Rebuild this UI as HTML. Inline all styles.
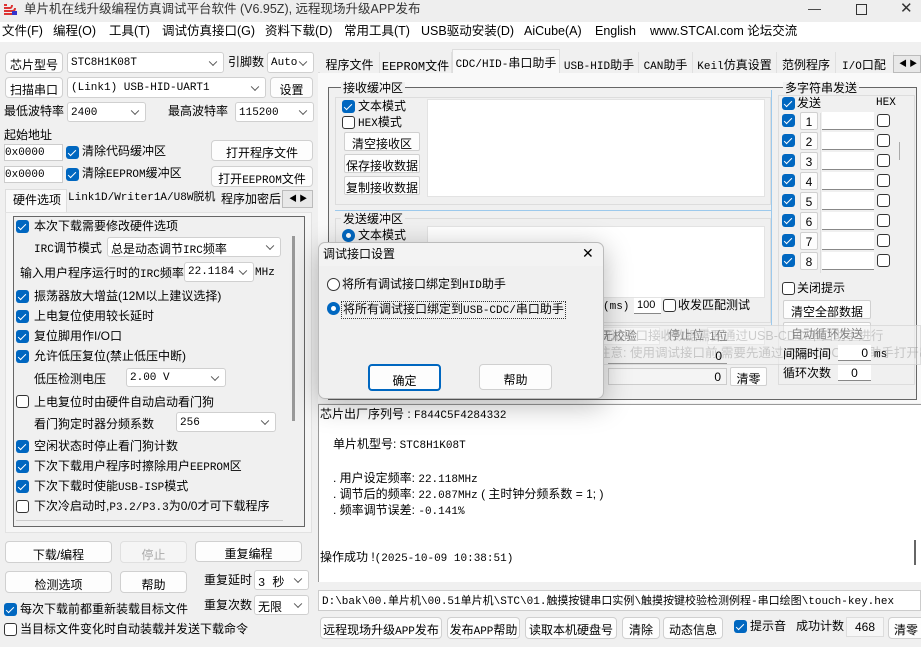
<!DOCTYPE html>
<html><head><meta charset="utf-8"><style>
*{box-sizing:border-box;margin:0;padding:0}
body{width:921px;height:647px;overflow:hidden;background:#f0f0f0;font-family:"Liberation Sans","Noto Sans CJK SC",sans-serif;font-size:12px;color:#000;position:relative}
.a{position:absolute;white-space:nowrap;line-height:1}
.btn{position:absolute;background:#fdfdfd;border:1px solid #d0d0d0;border-radius:4px;text-align:center;font-size:12px;white-space:nowrap}
.cmb{position:absolute;background:#fff;border:1px solid #d0d0d0;border-radius:3px;font-family:"Liberation Mono","Noto Sans CJK SC",monospace;font-size:11px;padding-left:3px;white-space:nowrap}
.cmb::after{content:"";position:absolute;right:7px;top:50%;width:5px;height:5px;border-right:1px solid #555;border-bottom:1px solid #555;transform:translateY(-70%) rotate(45deg)}
.ck{position:absolute;width:13px;height:13px;background:#0067c0;border-radius:3px}
.ck::after{content:"";position:absolute;left:4px;top:1.5px;width:3px;height:7px;border-right:1.3px solid #fff;border-bottom:1.3px solid #fff;transform:rotate(45deg)}
.uk{position:absolute;width:13px;height:13px;border:1px solid #333;border-radius:3px;background:#fff}
.in{position:absolute;background:#fff;border-bottom:1px solid #888;font-family:"Liberation Mono",monospace;font-size:11px}
.m{font-family:"Liberation Mono","Noto Sans CJK SC",monospace;font-size:11px}
.tab{position:absolute;top:52px;height:21px;border-right:1px solid #e0e0e0;text-align:center;padding-top:4px;font-size:12px;background:#f0f0f0}
</style></head><body>
<!-- title -->
<div class="a" style="left:0;top:0;width:921px;height:22px;background:#eeeeee"></div>
<svg class="a" style="left:2px;top:2px" width="16" height="14"><path d="M2 12h10M2 9h8c2 0 3-1 3-3M2 6h6c1 0 2-1 2-3M2 3h3" stroke="#d33" stroke-width="2" fill="none"/><rect x="10" y="9" width="5" height="4" fill="#33c"/></svg>
<div class="a" style="left:24px;top:3px;font-size:12.5px;color:#333">单片机在线升级编程仿真调试平台软件 (V6.95Z), 远程现场升级APP发布</div>
<div class="a" style="left:808px;top:2px;font-size:13px;color:#333">—</div>
<div class="a" style="left:856px;top:0px;width:11px;height:11px;border:1px solid #333;margin-top:4px"></div>
<div class="a" style="left:900px;top:1px;font-size:15px;color:#333">✕</div>
<!-- menu -->
<div class="a" style="left:0;top:22px;width:921px;height:20px;background:#fff"></div>
<div class="a" style="left:2px;top:25px;font-size:12.5px;word-spacing:0">文件(F)</div>
<div class="a" style="left:53px;top:25px;font-size:12.5px">编程(O)</div>
<div class="a" style="left:109px;top:25px;font-size:12.5px">工具(T)</div>
<div class="a" style="left:162px;top:25px;font-size:12.5px">调试仿真接口(G)</div>
<div class="a" style="left:265px;top:25px;font-size:12.5px">资料下载(D)</div>
<div class="a" style="left:344px;top:25px;font-size:12.5px">常用工具(T)</div>
<div class="a" style="left:421px;top:25px;font-size:12.5px">USB驱动安装(D)</div>
<div class="a" style="left:524px;top:25px;font-size:12.5px">AiCube(A)</div>
<div class="a" style="left:595px;top:25px;font-size:12.5px">English</div>
<div class="a" style="left:650px;top:25px;font-size:12.5px">www.STCAI.com 论坛交流</div>

<!-- left panel -->
<div class="btn" style="left:5px;top:52px;width:58px;height:21px;padding-top:3px">芯片型号</div>
<div class="cmb" style="left:67px;top:52px;width:157px;height:21px;padding-top:4px">STC8H1K08T</div>
<div class="a" style="left:228px;top:56px">引脚数</div>
<div class="cmb" style="left:267px;top:52px;width:47px;height:21px;padding-top:4px">Auto</div>
<div class="btn" style="left:5px;top:77px;width:58px;height:21px;padding-top:3px">扫描串口</div>
<div class="cmb" style="left:67px;top:77px;width:199px;height:21px;padding-top:4px">(Link1) USB-HID-UART1</div>
<div class="btn" style="left:270px;top:77px;width:43px;height:21px;padding-top:3px">设置</div>
<div class="a" style="left:4px;top:105px">最低波特率</div>
<div class="cmb" style="left:67px;top:102px;width:79px;height:20px;padding-top:4px">2400</div>
<div class="a" style="left:168px;top:105px">最高波特率</div>
<div class="cmb" style="left:235px;top:102px;width:79px;height:20px;padding-top:4px">115200</div>
<div class="a" style="left:4px;top:129px">起始地址</div>
<div class="in" style="left:4px;top:144px;width:59px;height:17px;padding-top:2px;border:1px solid #ccc">0x0000</div>
<div class="ck" style="left:66px;top:146px"></div><div class="a" style="left:82px;top:145px">清除代码缓冲区</div>
<div class="btn" style="left:211px;top:140px;width:102px;height:21px;padding-top:3px">打开程序文件</div>
<div class="in" style="left:4px;top:166px;width:59px;height:17px;padding-top:2px;border:1px solid #ccc">0x0000</div>
<div class="ck" style="left:66px;top:168px"></div><div class="a" style="left:82px;top:167px">清除<span class="m">EEPROM</span>缓冲区</div>
<div class="btn" style="left:211px;top:166px;width:102px;height:21px;padding-top:3px">打开<span class="m">EEPROM</span>文件</div>
<!-- left tabs -->
<div class="a" style="left:5px;top:189px;width:62px;height:24px;background:#f9f9f9;border:1px solid #ddd;border-bottom:none;padding:4px 0 0 7px">硬件选项</div>
<div class="a m" style="left:68px;top:193px">Link1D/Writer1A/U8W脱机</div>
<div class="a" style="left:221px;top:193px">程序加密后</div>
<div class="a" style="left:282px;top:190px;width:31px;height:18px;background:#e8e8e8;border:1px solid #bbb;font-size:8px;padding:4px 0 0 6px">◀ ▶</div>
<div class="a" style="left:5px;top:212px;width:307px;height:321px;border:1px solid #e2e2e2;background:#f6f6f6"></div>
<div class="a" style="left:13px;top:216px;width:292px;height:311px;border:1px solid #666;background:#f0f0f0"></div>
<div class="a" style="left:292px;top:236px;width:3px;height:185px;background:#999"></div>
<div class="ck" style="left:16px;top:220px"></div><div class="a" style="left:34px;top:220px">本次下载需要修改硬件选项</div>
<div class="a" style="left:34px;top:242px"><span class="m">IRC</span>调节模式</div>
<div class="cmb" style="left:107px;top:237px;width:174px;height:20px;padding-top:2px;font-size:12px">总是动态调节<span class="m">IRC</span>频率</div>
<div class="a" style="left:20px;top:267px">输入用户程序运行时的<span class="m">IRC</span>频率</div>
<div class="cmb" style="left:184px;top:262px;width:70px;height:20px;padding-top:3px">22.1184</div>
<div class="a m" style="left:255px;top:268px">MHz</div>
<div class="ck" style="left:16px;top:290px"></div><div class="a" style="left:34px;top:290px">振荡器放大增益(12M以上建议选择)</div>
<div class="ck" style="left:16px;top:310px"></div><div class="a" style="left:34px;top:310px">上电复位使用较长延时</div>
<div class="ck" style="left:16px;top:330px"></div><div class="a" style="left:34px;top:330px">复位脚用作I/O口</div>
<div class="ck" style="left:16px;top:350px"></div><div class="a" style="left:34px;top:350px">允许低压复位(禁止低压中断)</div>
<div class="a" style="left:34px;top:373px">低压检测电压</div>
<div class="cmb" style="left:126px;top:368px;width:100px;height:19px;padding-top:3px">2.00 V</div>
<div class="uk" style="left:16px;top:395px"></div><div class="a" style="left:34px;top:396px">上电复位时由硬件自动启动看门狗</div>
<div class="a" style="left:34px;top:418px">看门狗定时器分频系数</div>
<div class="cmb" style="left:176px;top:412px;width:100px;height:20px;padding-top:4px">256</div>
<div class="ck" style="left:16px;top:440px"></div><div class="a" style="left:34px;top:440px">空闲状态时停止看门狗计数</div>
<div class="ck" style="left:16px;top:460px"></div><div class="a" style="left:34px;top:460px">下次下载用户程序时擦除用户<span class="m">EEPROM</span>区</div>
<div class="ck" style="left:16px;top:480px"></div><div class="a" style="left:34px;top:480px">下次下载时使能<span class="m">USB-ISP</span>模式</div>
<div class="uk" style="left:16px;top:500px"></div><div class="a" style="left:34px;top:500px">下次冷启动时,<span class="m">P3.2/P3.3</span>为0/0才可下载程序</div>
<div class="a" style="left:16px;top:520px;width:267px;height:1px;background:#ccc"></div>
<!-- left buttons -->
<div class="btn" style="left:5px;top:541px;width:107px;height:22px;padding-top:4px">下载/编程</div>
<div class="btn" style="left:120px;top:541px;width:67px;height:22px;padding-top:4px;color:#aaa;background:#f5f5f5;border-color:#e0e0e0">停止</div>
<div class="btn" style="left:195px;top:541px;width:107px;height:21px;padding-top:3px">重复编程</div>
<div class="btn" style="left:5px;top:571px;width:107px;height:22px;padding-top:4px">检测选项</div>
<div class="btn" style="left:120px;top:571px;width:67px;height:22px;padding-top:4px">帮助</div>
<div class="a" style="left:204px;top:574px">重复延时</div>
<div class="cmb" style="left:254px;top:570px;width:55px;height:20px;padding-top:2px;font-size:12px">3 秒</div>
<div class="ck" style="left:4px;top:603px"></div><div class="a" style="left:20px;top:603px">每次下载前都重新装载目标文件</div>
<div class="a" style="left:204px;top:599px">重复次数</div>
<div class="cmb" style="left:254px;top:595px;width:55px;height:20px;padding-top:2px;font-size:12px">无限</div>
<div class="uk" style="left:4px;top:623px"></div><div class="a" style="left:20px;top:623px">当目标文件变化时自动装载并发送下载命令</div>

<!-- right tabs -->
<div class="a" style="left:318px;top:72px;width:603px;height:1px;background:#ddd"></div>
<div class="tab" style="left:320px;width:60px">程序文件</div>
<div class="tab m" style="left:380px;width:72px;padding-top:5px">EEPROM文件</div>
<div class="tab" style="left:452px;top:49px;height:25px;width:108px;background:#f9f9f9;border:1px solid #ddd;border-bottom:none"><span class="m">CDC/HID-</span>串口助手</div>
<div class="tab" style="left:560px;width:79px"><span class="m">USB-HID</span>助手</div>
<div class="tab" style="left:639px;width:54px"><span class="m">CAN</span>助手</div>
<div class="tab" style="left:693px;width:84px"><span class="m">Keil</span>仿真设置</div>
<div class="tab" style="left:777px;width:59px">范例程序</div>
<div class="tab" style="left:836px;width:58px;text-align:left;overflow:hidden;padding-left:6px"><span class="m">I/O</span>口配置</div>
<div class="a" style="left:893px;top:55px;width:28px;height:18px;background:#e8e8e8;border:1px solid #bbb;font-size:8px;padding:4px 0 0 5px">◀ ▶</div>
<div class="a" style="left:318px;top:73px;width:603px;height:330px;background:#f9f9f9"></div>
<div class="a" style="left:328px;top:87px;width:589px;height:313px;border:1px solid #666;background:#f0f0f0"></div>
<!-- receive group -->
<div class="a" style="left:335px;top:97px;width:436px;height:108px;border:1px solid #ddd"></div>
<div class="a" style="left:341px;top:82px;background:#f0f0f0;padding:0 2px">接收缓冲区</div>
<div class="a" style="left:427px;top:99px;width:338px;height:98px;background:#fff;border:1px solid #e3e3e3"></div>
<div class="ck" style="left:342px;top:100px"></div><div class="a" style="left:358px;top:100px">文本模式</div>
<div class="uk" style="left:342px;top:116px"></div><div class="a" style="left:358px;top:116px"><span class="m">HEX</span>模式</div>
<div class="btn" style="left:344px;top:132px;width:76px;height:19px;padding-top:2px;border-radius:2px">清空接收区</div>
<div class="btn" style="left:344px;top:154px;width:76px;height:19px;padding-top:2px;border-radius:2px">保存接收数据</div>
<div class="btn" style="left:344px;top:176px;width:76px;height:19px;padding-top:2px;border-radius:2px">复制接收数据</div>
<div class="a" style="left:335px;top:210px;width:436px;height:1px;background:#9cc9ec"></div>
<div class="a" style="left:771px;top:90px;width:1px;height:235px;background:#9cc9ec"></div>
<div class="a" style="left:335px;top:218px;width:436px;height:105px;border:1px solid #ddd"></div>
<div class="a" style="left:341px;top:213px;background:#f0f0f0;padding:0 2px">发送缓冲区</div>
<div class="a" style="left:342px;top:229px;width:13px;height:13px;border-radius:50%;border:4px solid #0067c0;background:#fff"></div>
<div class="a" style="left:358px;top:229px">文本模式</div>
<div class="a" style="left:427px;top:226px;width:338px;height:72px;background:#fff;border:1px solid #e3e3e3"></div>
<div class="a" style="left:603px;top:299px"><span class="m">(ms)</span></div>
<div class="a m" style="left:634px;top:298px;width:27px;height:16px;background:#fff;border-bottom:1px solid #888;padding:2px 0 0 3px;font-family:'Liberation Sans'">100</div>
<div class="uk" style="left:663px;top:299px"></div><div class="a" style="left:678px;top:299px">收发匹配测试</div>
<!-- multi-string -->
<div class="a" style="left:778px;top:95px;width:137px;height:290px;border:1px solid #ddd"></div>
<div class="a" style="left:783px;top:82px;background:#f0f0f0;padding:0 2px">多字符串发送</div>
<div class="ck" style="left:782px;top:97px"></div><div class="a" style="left:797px;top:97px">发送</div>
<div class="a m" style="left:876px;top:98px">HEX</div>
<div class="a" style="left:820px;top:113px;width:1px;height:160px;background:#ddd"></div>
<div class="a" style="left:899px;top:142px;width:1px;height:18px;background:#aaa"></div>
<div id="rows"></div>
<div class="uk" style="left:782px;top:282px"></div><div class="a" style="left:797px;top:282px">关闭提示</div>
<div class="btn" style="left:783px;top:300px;width:88px;height:19px;padding-top:2px;border-radius:2px">清空全部数据</div>
<div class="btn" style="left:783px;top:322px;width:88px;height:19px;padding-top:2px;border-radius:2px">自动循环发送</div>
<div class="a" style="left:597px;top:327px;width:63px;height:18px;background:#fff;border:1px solid #ddd;padding:2px 0 0 3px">无校验</div>
<div class="a" style="left:668px;top:329px">停止位</div>
<div class="a" style="left:707px;top:327px;width:58px;height:18px;background:#fff;border:1px solid #ddd;padding:2px 0 0 1px">1位</div>
<div class="a" style="left:597px;top:325px;width:324px;height:40px;background:rgba(240,240,240,.55);border:1px solid rgba(200,200,200,.5)"></div>
<div class="a" style="left:598px;top:330px;color:rgba(120,120,120,.35);font-size:12.5px">调试接口接收数据需要通过USB-CDC/串口助手进行</div>
<div class="a" style="left:598px;top:347px;color:rgba(120,120,120,.35);font-size:12.5px">注意: 使用调试接口前,需要先通过USB-CDC/串口助手打开串口</div>
<div class="a" style="left:783px;top:348px">间隔时间</div>
<div class="a" style="left:838px;top:345px;width:33px;height:16px;background:#fff;border-bottom:1px solid #888;text-align:right;padding:2px 3px 0 0">0</div>
<div class="a m" style="left:874px;top:350px">ms</div>
<div class="a" style="left:783px;top:367px">循环次数</div>
<div class="a" style="left:838px;top:365px;width:33px;height:16px;background:#fff;border-bottom:1px solid #888;text-align:center;padding-top:2px">0</div>
<div class="a" style="left:608px;top:347px;width:119px;height:17px;border-bottom:1px solid #999;text-align:right;padding:3px 5px 0 0">0</div>
<div class="a" style="left:608px;top:368px;width:119px;height:17px;background:#f4f4f4;border:1px solid #ccc;text-align:right;padding:2px 5px 0 0">0</div>
<div class="btn" style="left:730px;top:367px;width:37px;height:19px;padding-top:2px;border-radius:2px">清零</div>

<!-- output -->
<div class="a" style="left:318px;top:404px;width:603px;height:178px;background:#fff;border-left:1px solid #999;border-top:1px solid #999"></div>
<div class="a" style="left:914px;top:540px;width:2px;height:25px;background:#666"></div>
<div class="a" style="left:320px;top:408px">芯片出厂序列号 : <span class="m">F844C5F4284332</span></div>
<div class="a" style="left:333px;top:438px">单片机型号: <span class="m">STC8H1K08T</span></div>
<div class="a" style="left:333px;top:472px">. 用户设定频率: <span class="m">22.118MHz</span></div>
<div class="a" style="left:333px;top:488px">. 调节后的频率: <span class="m">22.087MHz</span> ( 主时钟分频系数 = 1; )</div>
<div class="a" style="left:333px;top:504px">. 频率调节误差: <span class="m">-0.141%</span></div>
<div class="a" style="left:320px;top:551px">操作成功 !<span class="m">(2025-10-09 10:38:51)</span></div>
<div class="a" style="left:318px;top:590px;width:603px;height:21px;background:#fff;border:1px solid #ccc"></div>
<div class="a m" style="left:322px;top:595px">D:\bak\00.<span style="font-family:'Noto Sans CJK SC'">单片机</span>\00.51<span style="font-family:'Noto Sans CJK SC'">单片机</span>\STC\01.<span style="font-family:'Noto Sans CJK SC'">触摸按键串口实例</span>\<span style="font-family:'Noto Sans CJK SC'">触摸按键校验检测例程</span>-<span style="font-family:'Noto Sans CJK SC'">串口绘图</span>\touch-key.hex</div>
<div class="btn" style="left:320px;top:617px;width:122px;height:22px;padding-top:3px">远程现场升级<span class="m">APP</span>发布</div>
<div class="btn" style="left:447px;top:617px;width:73px;height:22px;padding-top:3px">发布<span class="m">APP</span>帮助</div>
<div class="btn" style="left:525px;top:617px;width:92px;height:22px;padding-top:3px">读取本机硬盘号</div>
<div class="btn" style="left:622px;top:617px;width:38px;height:22px;padding-top:3px">清除</div>
<div class="btn" style="left:663px;top:617px;width:60px;height:22px;padding-top:3px">动态信息</div>
<div class="ck" style="left:734px;top:620px"></div><div class="a" style="left:750px;top:620px">提示音</div>
<div class="a" style="left:796px;top:620px">成功计数</div>
<div class="a" style="left:846px;top:617px;width:38px;height:20px;background:#f6f6f6;border:1px solid #ddd;text-align:center;padding-top:3px">468</div>
<div class="btn" style="left:888px;top:617px;width:40px;height:22px;padding-top:3px;text-align:left;padding-left:5px">清零</div>

<!-- dialog -->
<div class="a" style="left:318px;top:242px;width:286px;height:157px;background:#f0f0f0;border:1px solid #bbb;border-radius:7px;box-shadow:0 6px 28px rgba(0,0,0,.28)"></div>
<div class="a" style="left:319px;top:243px;width:284px;height:23px;background:#f3f3f3;border-radius:7px 7px 0 0"></div>
<div class="a" style="left:323px;top:248px">调试接口设置</div>
<div class="a" style="left:582px;top:246px;font-size:14px">✕</div>
<div class="a" style="left:327px;top:278px;width:13px;height:13px;border-radius:50%;border:1px solid #333;background:#fff"></div>
<div class="a" style="left:342px;top:278px">将所有调试接口绑定到<span class="m">HID</span>助手</div>
<div class="a" style="left:327px;top:302px;width:13px;height:13px;border-radius:50%;border:4px solid #0067c0;background:#fff"></div>
<div class="a" style="left:341px;top:301px;border:1px dotted #333;padding:1px">将所有调试接口绑定到<span class="m">USB-CDC/</span>串口助手</div>
<div class="btn" style="left:368px;top:364px;width:73px;height:27px;padding-top:6px;border:2px solid #0067c0">确定</div>
<div class="btn" style="left:479px;top:364px;width:73px;height:26px;padding-top:6px">帮助</div>
<script>
var h='';for(var i=0;i<8;i++){var y=114+i*20;
h+='<div class="ck" style="left:782px;top:'+y+'px"></div>'+
'<div class="btn" style="left:800px;top:'+(y-2)+'px;width:18px;height:18px;padding-top:2px;border-radius:2px">'+(i+1)+'</div>'+
'<div class="a" style="left:822px;top:'+(y-2)+'px;width:52px;height:18px;background:#fff;border-bottom:1px solid #888"></div>'+
'<div class="uk" style="left:877px;top:'+y+'px"></div>';}
document.getElementById('rows').innerHTML=h;
</script>
</body></html>
